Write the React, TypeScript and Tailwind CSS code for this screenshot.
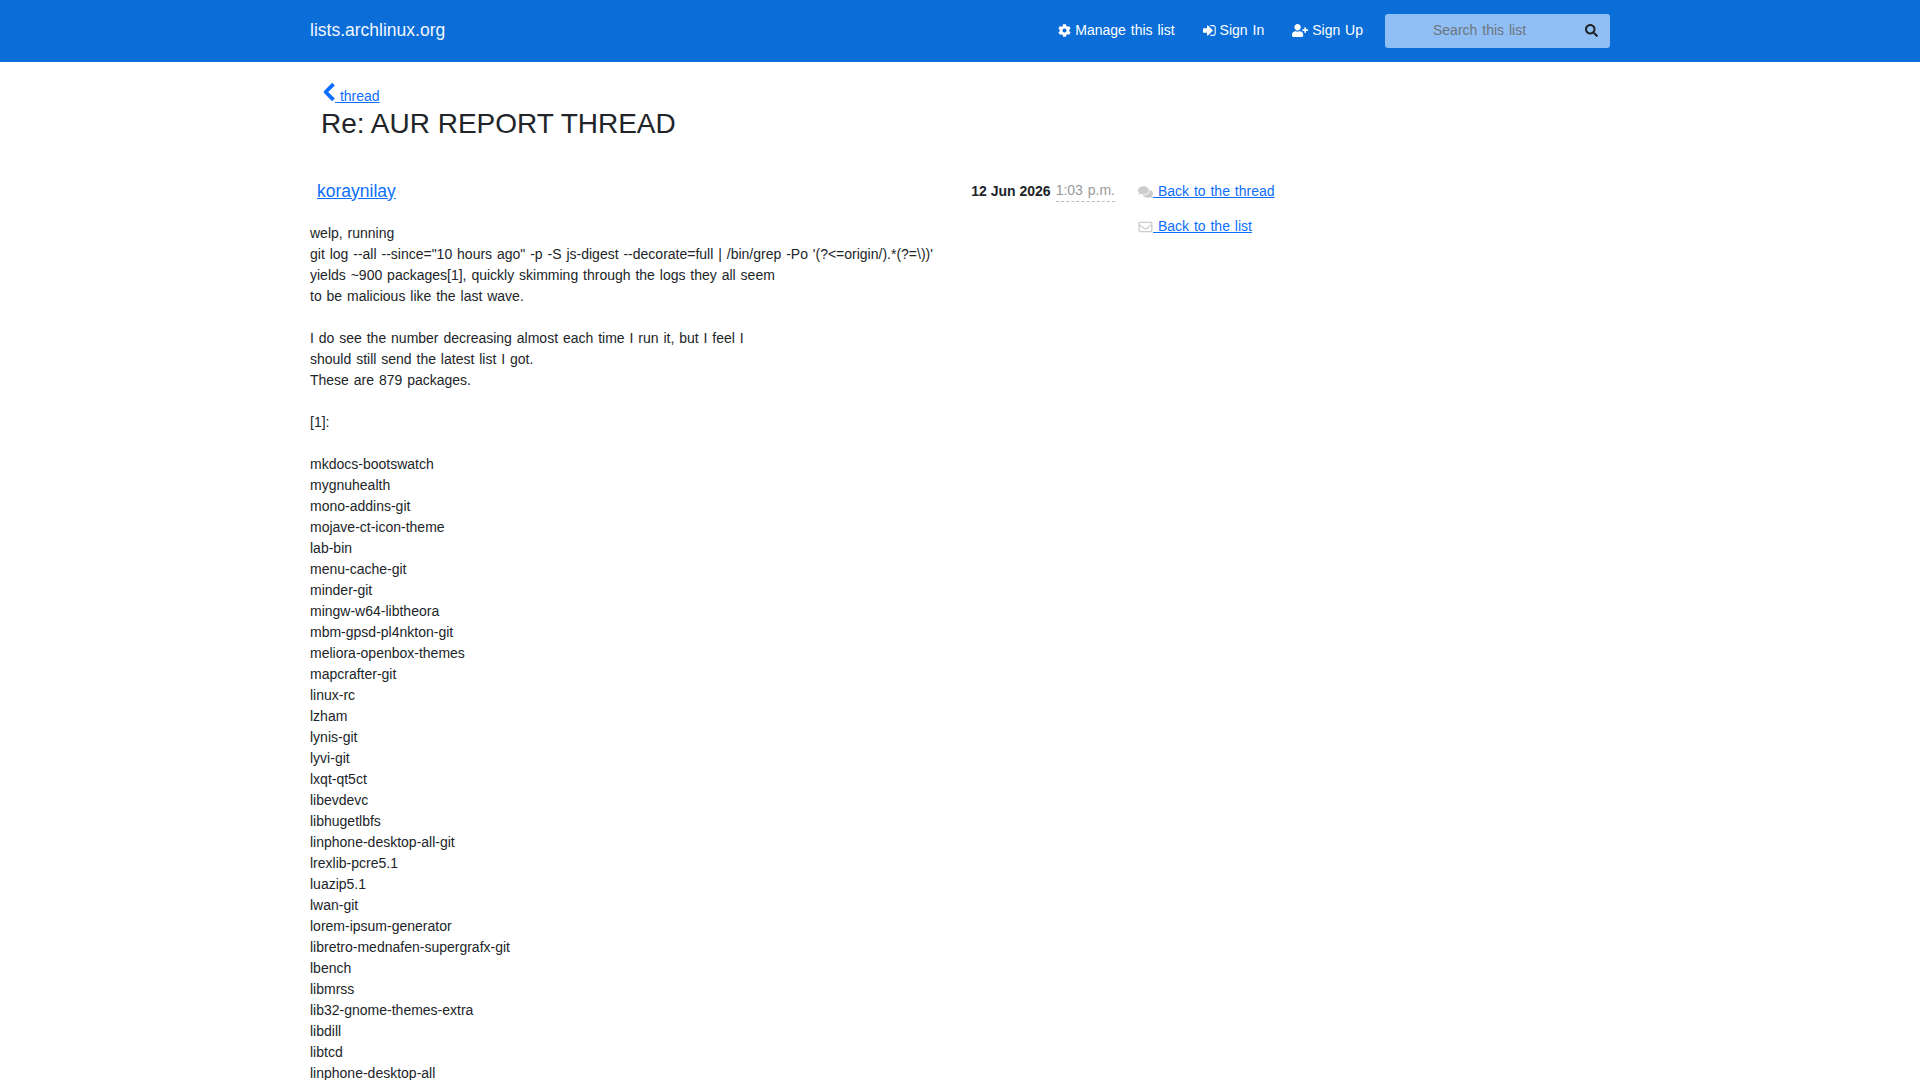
import { FaCog, FaComments, FaRegEnvelope, FaSearch, FaUserPlus } from "react-icons/fa";

const intro = [
  "welp, running",
  "git log --all --since=\"10 hours ago\" -p -S js-digest --decorate=full | /bin/grep -Po '(?<=origin/).*(?=\\))'",
  "yields ~900 packages[1], quickly skimming through the logs they all seem",
  "to be malicious like the last wave.",
  "",
  "I do see the number decreasing almost each time I run it, but I feel I",
  "should still send the latest list I got.",
  "These are 879 packages.",
  "",
  "[1]:",
  "",
];

const packages = [
  "mkdocs-bootswatch",
  "mygnuhealth",
  "mono-addins-git",
  "mojave-ct-icon-theme",
  "lab-bin",
  "menu-cache-git",
  "minder-git",
  "mingw-w64-libtheora",
  "mbm-gpsd-pl4nkton-git",
  "meliora-openbox-themes",
  "mapcrafter-git",
  "linux-rc",
  "lzham",
  "lynis-git",
  "lyvi-git",
  "lxqt-qt5ct",
  "libevdevc",
  "libhugetlbfs",
  "linphone-desktop-all-git",
  "lrexlib-pcre5.1",
  "luazip5.1",
  "lwan-git",
  "lorem-ipsum-generator",
  "libretro-mednafen-supergrafx-git",
  "lbench",
  "libmrss",
  "lib32-gnome-themes-extra",
  "libdill",
  "libtcd",
  "linphone-desktop-all",
];

// fa-sign-in from Font Awesome 4, not in the FA5 set
function SignInIcon() {
  return (
    <svg viewBox="-32 0 1536 1536" className="w-[13px] h-[13px]" fill="currentColor">
      <path d="M1120 768q0 26-19 45l-544 544q-19 19-45 19t-45-19-19-45v-288H32q-26 0-45-19t-19-45V576q0-26 19-45t45-19h416V224q0-26 19-45t45-19 45 19l544 544q19 19 19 45zm352-352v704q0 119-84.5 203.5T1184 1408H864q-13 0-22.5-9.5T832 1376q0-4-1-20t-.5-26.5 3-23.5 10-19.5 20.5-6.5h320q66 0 113-47t47-113V416q0-66-47-113t-113-47H864q-13 0-22.5-9.5T832 224q0-4-1-20t-.5-26.5 3-23.5 10-19.5T864 128h320q119 0 203.5 84.5T1472 416z" />
    </svg>
  );
}

export default function App() {
  return (
    <div className="min-h-screen bg-white text-[14px] leading-[21px] text-[#212529] [word-spacing:1px] font-['Liberation_Sans',Arial,sans-serif]">
      <nav className="h-[62px] bg-[#0a6dd8] text-white">
        <div className="w-[1300px] mx-auto h-full flex items-center pb-[2px]">
          <a className="text-[17.5px] text-[#f2f7fd]">lists.archlinux.org</a>
          <div className="ml-auto flex items-center">
            <a className="flex items-center gap-[4px]">
              <FaCog className="w-[13px] h-[13px]" />
              Manage this list
            </a>
            <a className="flex items-center gap-[4px] ml-[28px]">
              <SignInIcon />
              Sign In
            </a>
            <a className="flex items-center gap-[4px] ml-[28px]">
              <FaUserPlus className="w-[16px] h-[13px]" />
              Sign Up
            </a>
            <div className="ml-[22px] -mb-[2px] w-[225px] h-[34px] rounded-[3px] bg-[#90bff5] flex items-center">
              <span className="ml-[48px] -mt-[2px] text-[#6c757d]">Search this list</span>
              <FaSearch className="ml-auto mr-[12px] -mt-[2px] w-[13px] h-[13px] text-[#212529]" />
            </div>
          </div>
        </div>
      </nav>

      <main className="w-[1300px] mx-auto">
        <div className="pt-[20px] pl-[12px]">
          <a className="text-[#0d6efd] underline">
            <svg viewBox="0 0 13 20" className="inline-block w-[13px] h-[20px] align-[-1px]" fill="none" stroke="currentColor" strokeWidth="3.8" strokeLinejoin="round">
              <path d="M11.5 2.2 L3.6 10 L11.5 17.8" />
            </svg>{" "}
            thread
          </a>
          <h1 className="-ml-[1px] text-[28px] leading-[34px] font-normal [word-spacing:0px]">Re: AUR REPORT THREAD</h1>
        </div>

        <div className="flex mt-[33px]">
          <div className="w-[805px]">
            <div className="flex items-center h-[34px]">
              <a className="ml-[7px] text-[17.5px] text-[#0d6efd] underline">koraynilay</a>
              <div className="ml-auto flex items-center gap-[5px]">
                <span className="font-bold [word-spacing:0px]">12 Jun 2026</span>
                <span className="text-[#999] border-b border-dashed border-[#bbb]">1:03 p.m.</span>
              </div>
            </div>
            <div className="mt-[15px]">
              {intro.concat(packages).map((line, i) => (
                <div key={i} className="h-[21px]">
                  {line}
                </div>
              ))}
            </div>
          </div>
          <div className="ml-[23px] pt-[7px] flex flex-col gap-[14px]">
            <a className="text-[#0d6efd] underline whitespace-nowrap">
              <FaComments className="inline-block w-[15px] h-[14px] text-[#ccc] align-[-3px]" /> Back to the thread
            </a>
            <a className="text-[#0d6efd] underline whitespace-nowrap">
              <FaRegEnvelope className="inline-block w-[15px] h-[14px] text-[#ccc] align-[-3px]" /> Back to the list
            </a>
          </div>
        </div>
      </main>
    </div>
  );
}
